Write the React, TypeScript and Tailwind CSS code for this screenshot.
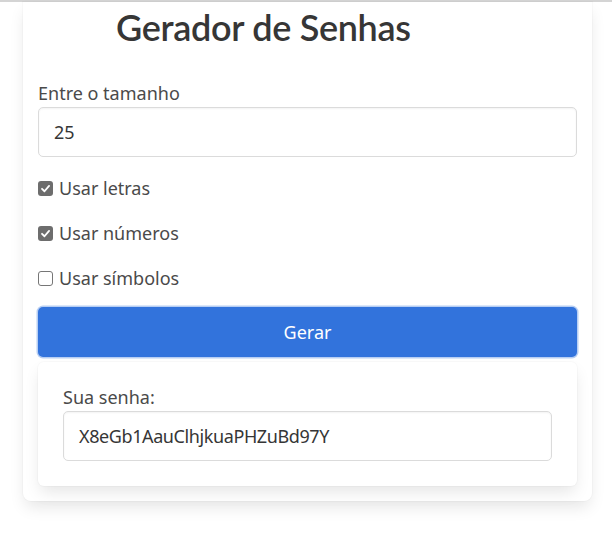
import { useState } from "react";

function CheckRow({ label, checked }: { label: string; checked: boolean }) {
    return (
        <label className="flex h-[27px] items-center gap-[6px]">
            {checked ? (
                <span className="flex h-[15px] w-[15px] items-center justify-center rounded-[3px] bg-[#6d6d6d]">
                    <svg width="11" height="11" viewBox="0 0 12 12">
                        <path d="M2.2 6.3 L4.9 9 L9.9 3.2" fill="none" stroke="#fff" strokeWidth="2" strokeLinecap="round" strokeLinejoin="round" />
                    </svg>
                </span>
            ) : (
                <span className="h-[15px] w-[15px] rounded-[3px] border border-[#767676] bg-white" />
            )}
            <span>{label}</span>
        </label>
    );
}

export default function App() {
    const [size] = useState("25");
    const [password] = useState("X8eGb1AauClhjkuaPHZuBd97Y");

    return (
        <div className="min-h-screen bg-white font-['Noto_Sans',sans-serif] text-[18px] text-[#4a4a4a]">
            <div className="h-[2px] bg-[#d4d4d4]" />
            <div className="w-[592px] pl-[23px]">
                <div className="rounded-b-[8px] bg-white px-[15px] pb-[15px] shadow-[0_8px_16px_-2px_rgba(10,10,10,0.1),0_0_0_1px_rgba(10,10,10,0.02)]">
                    <h1 className="pl-[78px] pt-[3px] font-['Lato',sans-serif] text-[36px] font-semibold leading-[45px] tracking-[-0.3px] text-[#363636]">
                        Gerador de Senhas
                    </h1>

                    <div className="mt-[30px] leading-[27px]">Entre o tamanho</div>
                    <div className="flex h-[50px] items-center rounded-[5px] border border-[#dbdbdb] px-[15px] text-[#363636] shadow-[inset_0_1px_2px_rgba(10,10,10,0.05)]">
                        {size}
                    </div>

                    <div className="mt-[18px] flex flex-col gap-[18px]">
                        <CheckRow label="Usar letras" checked />
                        <CheckRow label="Usar números" checked />
                        <CheckRow label="Usar símbolos" checked={false} />
                    </div>

                    <button className="mt-[15px] flex h-[50px] w-full items-center justify-center rounded-[5px] bg-[#3273dc] text-white shadow-[0_0_0_1.5px_rgba(50,115,220,0.35)]">
                        Gerar
                    </button>

                    <div className="mt-[5px] rounded-[6px] bg-white px-[25px] pb-[25px] pt-[22px] shadow-[0_8px_16px_-2px_rgba(10,10,10,0.1),0_0_0_1px_rgba(10,10,10,0.02)]">
                        <div className="leading-[27px]">Sua senha:</div>
                        <div className="flex h-[50px] items-center rounded-[5px] border border-[#dbdbdb] px-[15px] tracking-[-0.4px] text-[#363636] shadow-[inset_0_1px_2px_rgba(10,10,10,0.05)]">
                            {password}
                        </div>
                    </div>
                </div>
            </div>
        </div>
    );
}
